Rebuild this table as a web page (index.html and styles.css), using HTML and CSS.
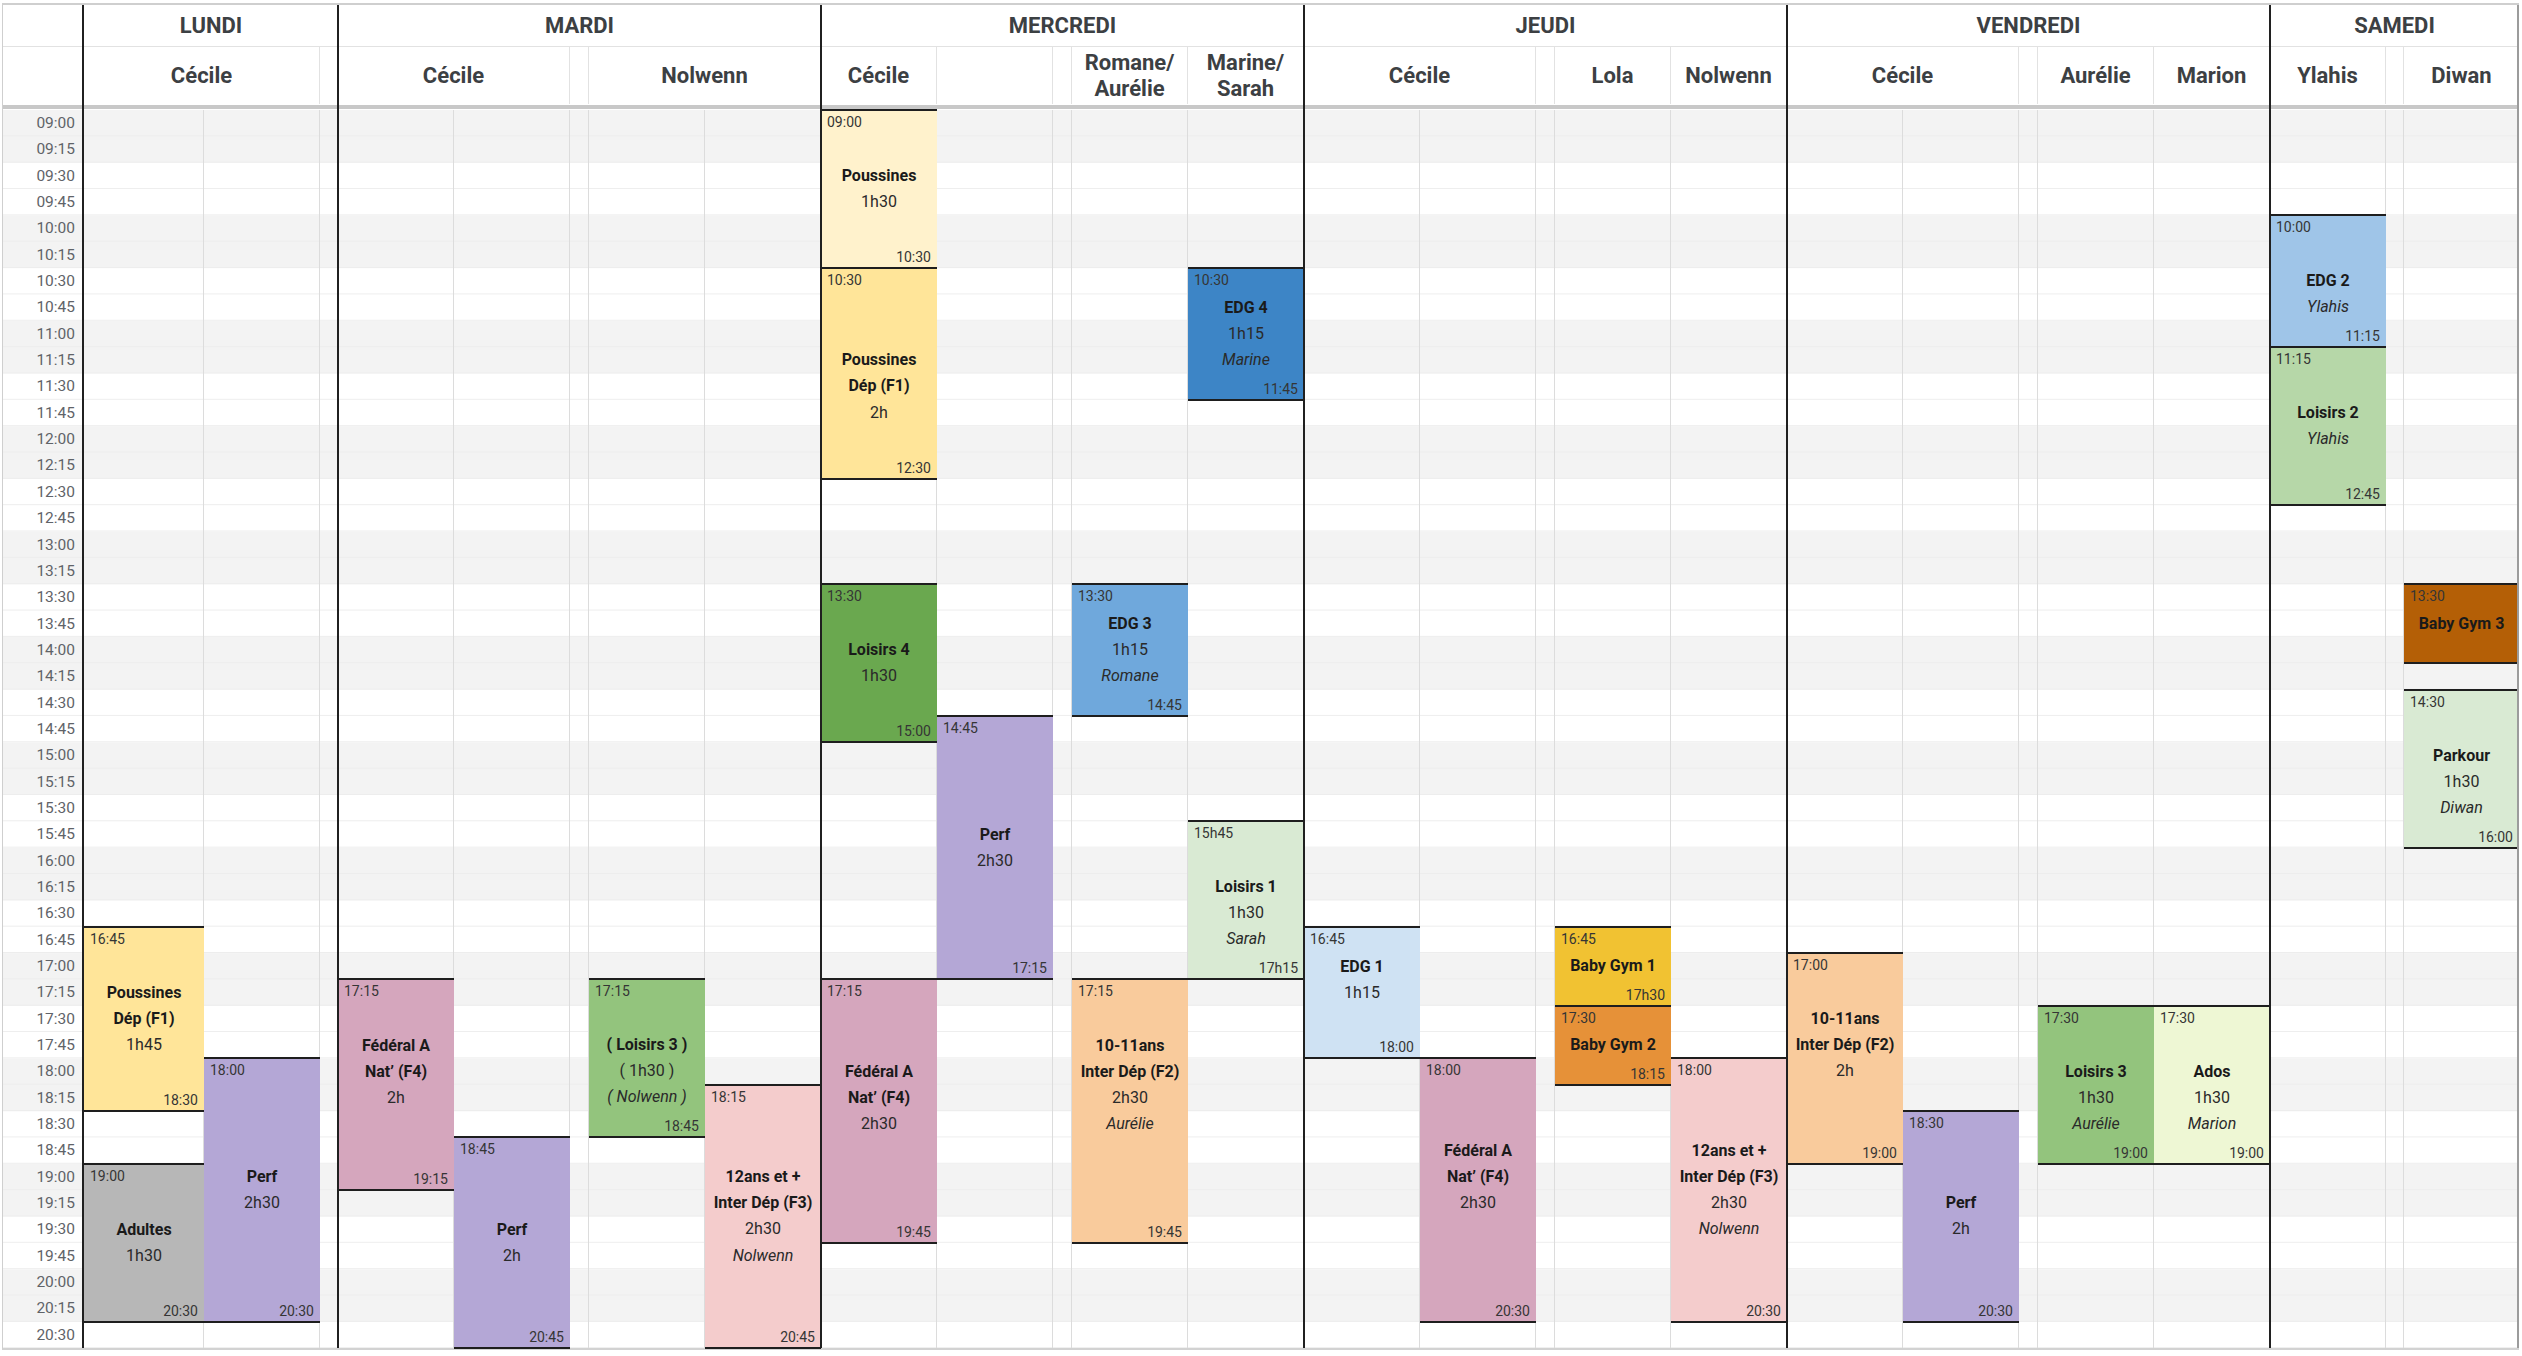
FILE: index.html
```html
<!DOCTYPE html>
<html lang="fr">
<head>
<meta charset="utf-8">
<title>Planning</title>
<link rel="stylesheet" href="styles.css">
</head>
<body>
<div class="sheet">
  <!-- header row 1 -->
  <div class="day corner" style="grid-column:1"></div>
  <div class="day" style="grid-column:2 / 5">LUNDI</div>
  <div class="day" style="grid-column:5 / 10">MARDI</div>
  <div class="day" style="grid-column:10 / 15">MERCREDI</div>
  <div class="day" style="grid-column:15 / 20">JEUDI</div>
  <div class="day" style="grid-column:20 / 25">VENDREDI</div>
  <div class="day" style="grid-column:25 / 28">SAMEDI</div>

  <!-- header row 2 -->
  <div class="name corner" style="grid-column:1"></div>
  <div class="name" style="grid-column:2 / 4">Cécile</div>
  <div class="name" style="grid-column:4"></div>
  <div class="name" style="grid-column:5 / 7">Cécile</div>
  <div class="name" style="grid-column:7"></div>
  <div class="name" style="grid-column:8 / 10">Nolwenn</div>
  <div class="name" style="grid-column:10">Cécile</div>
  <div class="name" style="grid-column:11"></div>
  <div class="name" style="grid-column:12"></div>
  <div class="name" style="grid-column:13">Romane/<br>Aurélie</div>
  <div class="name" style="grid-column:14">Marine/<br>Sarah</div>
  <div class="name" style="grid-column:15 / 17">Cécile</div>
  <div class="name" style="grid-column:17"></div>
  <div class="name" style="grid-column:18">Lola</div>
  <div class="name" style="grid-column:19">Nolwenn</div>
  <div class="name" style="grid-column:20 / 22">Cécile</div>
  <div class="name" style="grid-column:22"></div>
  <div class="name" style="grid-column:23">Aurélie</div>
  <div class="name" style="grid-column:24">Marion</div>
  <div class="name" style="grid-column:25">Ylahis</div>
  <div class="name" style="grid-column:26"></div>
  <div class="name last" style="grid-column:27">Diwan</div>

  <div class="sep"></div>

  <!-- time column -->
  <div class="times band">
    <span>09:00</span><span>09:15</span><span>09:30</span><span>09:45</span>
    <span>10:00</span><span>10:15</span><span>10:30</span><span>10:45</span>
    <span>11:00</span><span>11:15</span><span>11:30</span><span>11:45</span>
    <span>12:00</span><span>12:15</span><span>12:30</span><span>12:45</span>
    <span>13:00</span><span>13:15</span><span>13:30</span><span>13:45</span>
    <span>14:00</span><span>14:15</span><span>14:30</span><span>14:45</span>
    <span>15:00</span><span>15:15</span><span>15:30</span><span>15:45</span>
    <span>16:00</span><span>16:15</span><span>16:30</span><span>16:45</span>
    <span>17:00</span><span>17:15</span><span>17:30</span><span>17:45</span>
    <span>18:00</span><span>18:15</span><span>18:30</span><span>18:45</span>
    <span>19:00</span><span>19:15</span><span>19:30</span><span>19:45</span>
    <span>20:00</span><span>20:15</span><span>20:30</span>
  </div>

  <!-- body columns -->
  <div class="col band" style="grid-column:2"></div>
  <div class="col band" style="grid-column:3"></div>
  <div class="col band" style="grid-column:4"></div>
  <div class="col band" style="grid-column:5"></div>
  <div class="col band" style="grid-column:6"></div>
  <div class="col band" style="grid-column:7"></div>
  <div class="col band" style="grid-column:8"></div>
  <div class="col band" style="grid-column:9"></div>
  <div class="col band" style="grid-column:10"></div>
  <div class="col band" style="grid-column:11"></div>
  <div class="col band" style="grid-column:12"></div>
  <div class="col band" style="grid-column:13"></div>
  <div class="col band" style="grid-column:14"></div>
  <div class="col band" style="grid-column:15"></div>
  <div class="col band" style="grid-column:16"></div>
  <div class="col band" style="grid-column:17"></div>
  <div class="col band" style="grid-column:18"></div>
  <div class="col band" style="grid-column:19"></div>
  <div class="col band" style="grid-column:20"></div>
  <div class="col band" style="grid-column:21"></div>
  <div class="col band" style="grid-column:22"></div>
  <div class="col band" style="grid-column:23"></div>
  <div class="col band" style="grid-column:24"></div>
  <div class="col band" style="grid-column:25"></div>
  <div class="col band" style="grid-column:26"></div>
  <div class="col band last" style="grid-column:27"></div>

  <!-- LUNDI -->
  <div class="ev c-yellow2" style="grid-column:2; grid-row:35 / span 7; --n:7">
    <span class="s">16:45</span>
    <div class="body" style="grid-row:3 / span 3"><div class="b">Poussines</div><div class="b">Dép (F1)</div><div>1h45</div></div>
    <span class="e">18:30</span>
  </div>
  <div class="ev c-gray" style="grid-column:2; grid-row:44 / span 6; --n:6">
    <span class="s">19:00</span>
    <div class="body" style="grid-row:3 / span 2"><div class="b">Adultes</div><div>1h30</div></div>
    <span class="e">20:30</span>
  </div>
  <div class="ev c-purple" style="grid-column:3; grid-row:40 / span 10; --n:10">
    <span class="s">18:00</span>
    <div class="body" style="grid-row:5 / span 2"><div class="b">Perf</div><div>2h30</div></div>
    <span class="e">20:30</span>
  </div>

  <!-- MARDI -->
  <div class="ev c-magenta" style="grid-column:5; grid-row:37 / span 8; --n:8">
    <span class="s">17:15</span>
    <div class="body" style="grid-row:3 / span 3"><div class="b">Fédéral A</div><div class="b">Nat’ (F4)</div><div>2h</div></div>
    <span class="e">19:15</span>
  </div>
  <div class="ev c-purple" style="grid-column:6; grid-row:43 / span 8; --n:8">
    <span class="s">18:45</span>
    <div class="body" style="grid-row:4 / span 2"><div class="b">Perf</div><div>2h</div></div>
    <span class="e">20:45</span>
  </div>
  <div class="ev c-green1" style="grid-column:8; grid-row:37 / span 6; --n:6">
    <span class="s">17:15</span>
    <div class="body" style="grid-row:3 / span 3"><div class="b">( Loisirs 3 )</div><div>( 1h30 )</div><div class="i">( Nolwenn )</div></div>
    <span class="e">18:45</span>
  </div>
  <div class="ev c-red3" style="grid-column:9; grid-row:41 / span 10; --n:10">
    <span class="s">18:15</span>
    <div class="body" style="grid-row:4 / span 4"><div class="b">12ans et +</div><div class="b">Inter Dép (F3)</div><div>2h30</div><div class="i">Nolwenn</div></div>
    <span class="e">20:45</span>
  </div>

  <!-- MERCREDI -->
  <div class="ev c-yellow3" style="grid-column:10; grid-row:4 / span 6; --n:6">
    <span class="s">09:00</span>
    <div class="body" style="grid-row:3 / span 2"><div class="b">Poussines</div><div>1h30</div></div>
    <span class="e">10:30</span>
  </div>
  <div class="ev c-yellow2" style="grid-column:10; grid-row:10 / span 8; --n:8">
    <span class="s">10:30</span>
    <div class="body" style="grid-row:4 / span 3"><div class="b">Poussines</div><div class="b">Dép (F1)</div><div>2h</div></div>
    <span class="e">12:30</span>
  </div>
  <div class="ev c-dgreen" style="grid-column:10; grid-row:22 / span 6; --n:6">
    <span class="s">13:30</span>
    <div class="body" style="grid-row:3 / span 2"><div class="b">Loisirs 4</div><div>1h30</div></div>
    <span class="e">15:00</span>
  </div>
  <div class="ev c-magenta" style="grid-column:10; grid-row:37 / span 10; --n:10">
    <span class="s">17:15</span>
    <div class="body" style="grid-row:4 / span 3"><div class="b">Fédéral A</div><div class="b">Nat’ (F4)</div><div>2h30</div></div>
    <span class="e">19:45</span>
  </div>
  <div class="ev c-purple" style="grid-column:11; grid-row:27 / span 10; --n:10">
    <span class="s">14:45</span>
    <div class="body" style="grid-row:5 / span 2"><div class="b">Perf</div><div>2h30</div></div>
    <span class="e">17:15</span>
  </div>
  <div class="ev c-blue1" style="grid-column:13; grid-row:22 / span 5; --n:5">
    <span class="s">13:30</span>
    <div class="body" style="grid-row:2 / span 3"><div class="b">EDG 3</div><div>1h15</div><div class="i">Romane</div></div>
    <span class="e">14:45</span>
  </div>
  <div class="ev c-orange2" style="grid-column:13; grid-row:37 / span 10; --n:10">
    <span class="s">17:15</span>
    <div class="body" style="grid-row:3 / span 4"><div class="b">10-11ans</div><div class="b">Inter Dép (F2)</div><div>2h30</div><div class="i">Aurélie</div></div>
    <span class="e">19:45</span>
  </div>
  <div class="ev c-dblue" style="grid-column:14; grid-row:10 / span 5; --n:5">
    <span class="s">10:30</span>
    <div class="body" style="grid-row:2 / span 3"><div class="b">EDG 4</div><div>1h15</div><div class="i">Marine</div></div>
    <span class="e">11:45</span>
  </div>
  <div class="ev c-green3" style="grid-column:14; grid-row:31 / span 6; --n:6">
    <span class="s">15h45</span>
    <div class="body" style="grid-row:3 / span 3"><div class="b">Loisirs 1</div><div>1h30</div><div class="i">Sarah</div></div>
    <span class="e">17h15</span>
  </div>

  <!-- JEUDI -->
  <div class="ev c-blue3" style="grid-column:15; grid-row:35 / span 5; --n:5">
    <span class="s">16:45</span>
    <div class="body" style="grid-row:2 / span 2"><div class="b">EDG 1</div><div>1h15</div></div>
    <span class="e">18:00</span>
  </div>
  <div class="ev c-magenta" style="grid-column:16; grid-row:40 / span 10; --n:10">
    <span class="s">18:00</span>
    <div class="body" style="grid-row:4 / span 3"><div class="b">Fédéral A</div><div class="b">Nat’ (F4)</div><div>2h30</div></div>
    <span class="e">20:30</span>
  </div>
  <div class="ev c-dyellow" style="grid-column:18; grid-row:35 / span 3; --n:3">
    <span class="s">16:45</span>
    <div class="body" style="grid-row:2 / span 1"><div class="b">Baby Gym 1</div></div>
    <span class="e">17h30</span>
  </div>
  <div class="ev c-dorange" style="grid-column:18; grid-row:38 / span 3; --n:3">
    <span class="s">17:30</span>
    <div class="body" style="grid-row:2 / span 1"><div class="b">Baby Gym 2</div></div>
    <span class="e">18:15</span>
  </div>
  <div class="ev c-red3" style="grid-column:19; grid-row:40 / span 10; --n:10">
    <span class="s">18:00</span>
    <div class="body" style="grid-row:4 / span 4"><div class="b">12ans et +</div><div class="b">Inter Dép (F3)</div><div>2h30</div><div class="i">Nolwenn</div></div>
    <span class="e">20:30</span>
  </div>

  <!-- VENDREDI -->
  <div class="ev c-orange2" style="grid-column:20; grid-row:36 / span 8; --n:8">
    <span class="s">17:00</span>
    <div class="body" style="grid-row:3 / span 3"><div class="b">10-11ans</div><div class="b">Inter Dép (F2)</div><div>2h</div></div>
    <span class="e">19:00</span>
  </div>
  <div class="ev c-purple" style="grid-column:21; grid-row:42 / span 8; --n:8">
    <span class="s">18:30</span>
    <div class="body" style="grid-row:4 / span 2"><div class="b">Perf</div><div>2h</div></div>
    <span class="e">20:30</span>
  </div>
  <div class="ev c-green1" style="grid-column:23; grid-row:38 / span 6; --n:6">
    <span class="s">17:30</span>
    <div class="body" style="grid-row:3 / span 3"><div class="b">Loisirs 3</div><div>1h30</div><div class="i">Aurélie</div></div>
    <span class="e">19:00</span>
  </div>
  <div class="ev c-lime" style="grid-column:24; grid-row:38 / span 6; --n:6">
    <span class="s">17:30</span>
    <div class="body" style="grid-row:3 / span 3"><div class="b">Ados</div><div>1h30</div><div class="i">Marion</div></div>
    <span class="e">19:00</span>
  </div>

  <!-- SAMEDI -->
  <div class="ev c-blue2" style="grid-column:25; grid-row:8 / span 5; --n:5">
    <span class="s">10:00</span>
    <div class="body" style="grid-row:3 / span 2"><div class="b">EDG 2</div><div class="i">Ylahis</div></div>
    <span class="e">11:15</span>
  </div>
  <div class="ev c-green2" style="grid-column:25; grid-row:13 / span 6; --n:6">
    <span class="s">11:15</span>
    <div class="body" style="grid-row:3 / span 2"><div class="b">Loisirs 2</div><div class="i">Ylahis</div></div>
    <span class="e">12:45</span>
  </div>
  <div class="ev c-dorange2" style="grid-column:27; grid-row:22 / span 3; --n:3">
    <span class="s">13:30</span>
    <div class="body" style="grid-row:2 / span 1"><div class="b">Baby Gym 3</div></div>
  </div>
  <div class="ev c-green3" style="grid-column:27; grid-row:26 / span 6; --n:6">
    <span class="s">14:30</span>
    <div class="body" style="grid-row:3 / span 3"><div class="b">Parkour</div><div>1h30</div><div class="i">Diwan</div></div>
    <span class="e">16:00</span>
  </div>

  <!-- day separators -->
  <div class="vl first" style="grid-column:2"></div>
  <div class="vl" style="grid-column:5"></div>
  <div class="vl" style="grid-column:10"></div>
  <div class="vl" style="grid-column:15"></div>
  <div class="vl" style="grid-column:20"></div>
  <div class="vl" style="grid-column:25"></div>
  <div class="vl end" style="grid-column:27"></div>
</div>
</body>
</html>
```

FILE: styles.css
```css
:root {
  --rh: 26.35px;
  --line: #dcdcdc;
}

* {
  box-sizing: border-box;
}

html, body {
  margin: 0;
  background: #ffffff;
}

body {
  font-family: Roboto, "Liberation Sans", Arial, sans-serif;
  color: #202124;
}

.sheet {
  display: grid;
  width: max-content;
  margin: 3px 0 0 2px;
  border-top: 2px solid #cfcfcf;
  border-left: 1px solid #cfcfcf;
  border-bottom: 2px solid #d2d2d2;
  grid-template-columns:
    81px
    120px 116px 18px
    116px 116px 19px 116px 116px
    116px 116px 19px 116px 116px
    116px 116px 19px 116px 116px
    116px 116px 19px 116px 116px
    116px 18px 115px;
  grid-template-rows: 42px 57px 6px repeat(47, var(--rh));
}

/* ---------- header ---------- */
.day {
  grid-row: 1;
  display: flex;
  align-items: center;
  justify-content: center;
  font-size: 22px;
  font-weight: 700;
  color: #3c4043;
  border-bottom: 1px solid #e2e2e2;
}

.name {
  grid-row: 2;
  display: flex;
  align-items: center;
  justify-content: center;
  text-align: center;
  font-size: 22px;
  line-height: 26px;
  font-weight: 700;
  color: #3c4043;
  border-right: 1px solid #e2e2e2;
}

.name.last {
  border-right: none;
}

.sep {
  grid-row: 3;
  grid-column: 1 / -1;
  background: linear-gradient(to bottom, #ffffff 0 1px, #c8c8c8 1px 5px, #ffffff 5px);
}

/* ---------- body grid ---------- */
.band {
  background-color: #ffffff;
  background-image:
    linear-gradient(to bottom, transparent calc(var(--rh) - 1px), #ededed calc(var(--rh) - 1px)),
    linear-gradient(to bottom, #f3f3f3 50%, #ffffff 50%);
  background-size: 100% var(--rh), 100% calc(var(--rh) * 4);
}

.col {
  grid-row: 4 / span 47;
  border-right: 1px solid var(--line);
}

.col.last {
  border-right: none;
}

.times {
  grid-column: 1;
  grid-row: 4 / span 47;
  display: grid;
  grid-template-rows: repeat(47, var(--rh));
}

.times span {
  text-align: right;
  padding-right: 9px;
  font-size: 15.5px;
  line-height: var(--rh);
  color: #5f6368;
}

/* ---------- events ---------- */
.ev {
  display: grid;
  grid-template-rows: repeat(var(--n), minmax(0, 1fr));
  margin: -1px 0;
  border-top: 2px solid #1e1e1e;
  border-bottom: 2px solid #1e1e1e;
  color: #1c1c1c;
  z-index: 1;
}

.ev .s,
.ev .e {
  font-size: 14px;
  line-height: 16px;
  color: #353535;
  grid-column: 1;
}

.ev .s {
  grid-row: 1;
  align-self: start;
  justify-self: start;
  padding: 3px 0 0 6px;
}

.ev .e {
  grid-row: var(--n);
  align-self: end;
  justify-self: end;
  padding: 0 6px 2px 0;
}

.ev .body {
  grid-column: 1;
  display: grid;
  grid-auto-rows: minmax(0, 1fr);
  align-items: center;
  text-align: center;
  font-size: 16px;
  line-height: 18px;
  color: #2a2a2a;
  white-space: nowrap;
}

.ev .b {
  font-weight: 700;
  color: #1a1a1a;
}

.ev .i {
  font-style: italic;
}

.c-yellow3 { background: #fff2cc; }
.c-yellow2 { background: #ffe599; }
.c-gray    { background: #b7b7b7; }
.c-purple  { background: #b4a7d6; }
.c-magenta { background: #d5a6bd; }
.c-green1  { background: #93c47d; }
.c-green2  { background: #b6d7a8; }
.c-green3  { background: #d9ead3; }
.c-dgreen  { background: #6aa84f; }
.c-red3    { background: #f4cccc; }
.c-blue1   { background: #6fa8dc; }
.c-blue2   { background: #9fc5e8; }
.c-blue3   { background: #cfe2f3; }
.c-dblue   { background: #3d85c6; }
.c-orange2 { background: #f9cb9c; }
.c-dyellow { background: #f1c232; }
.c-dorange { background: #e69138; }
.c-dorange2 { background: #b45f06; }
.c-lime    { background: #eef7d4; }

/* ---------- day separators ---------- */
.vl {
  grid-row: 1 / -1;
  justify-self: start;
  width: 2px;
  margin-left: -1px;
  background: #202020;
  z-index: 2;
}

.vl.first {
  margin-left: -2px;
}

.vl.end {
  justify-self: end;
  margin-left: 0;
  background: #9c9c9c;
}
```
